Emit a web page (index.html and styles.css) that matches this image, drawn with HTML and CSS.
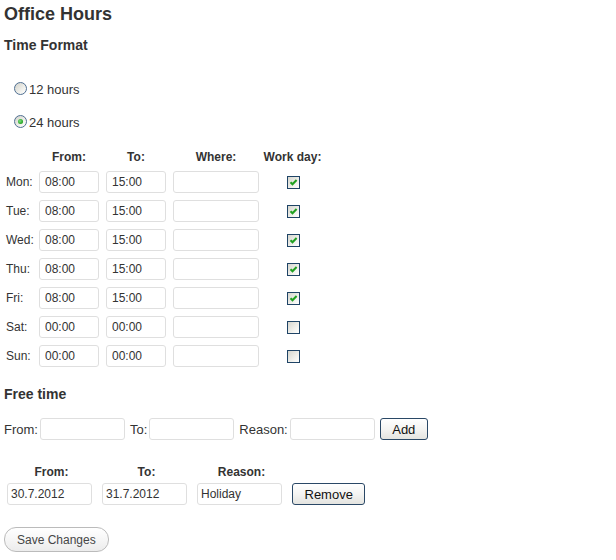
FILE: index.html
```html
<!DOCTYPE html>
<html>
<head>
<meta charset="utf-8">
<title>Office Hours</title>
<link rel="stylesheet" href="styles.css">
</head>
<body>
<div class="wrap">
  <h2 class="title">Office Hours</h2>
  <h3 class="section">Time Format</h3>
  <div class="radios">
    <label class="radio-row"><span class="radio"></span>12 hours</label>
    <label class="radio-row"><span class="radio checked"><span class="dot"></span></span>24 hours</label>
  </div>

  <div class="hours">
    <span></span>
    <span class="hd">From:</span>
    <span class="hd">To:</span>
    <span class="hd">Where:</span>
    <span class="hd workday">Work day:</span>

    <span class="day">Mon:</span><input class="field" value="08:00"><input class="field" value="15:00"><input class="field"><span class="cb on"><svg viewBox="0 0 11 11" width="11" height="11"><path d="M2.5 5.2 L4.5 7.3 L8.6 3" fill="none" stroke="#21a121" stroke-width="2"/></svg></span>
    <span class="day">Tue:</span><input class="field" value="08:00"><input class="field" value="15:00"><input class="field"><span class="cb on"><svg viewBox="0 0 11 11" width="11" height="11"><path d="M2.5 5.2 L4.5 7.3 L8.6 3" fill="none" stroke="#21a121" stroke-width="2"/></svg></span>
    <span class="day">Wed:</span><input class="field" value="08:00"><input class="field" value="15:00"><input class="field"><span class="cb on"><svg viewBox="0 0 11 11" width="11" height="11"><path d="M2.5 5.2 L4.5 7.3 L8.6 3" fill="none" stroke="#21a121" stroke-width="2"/></svg></span>
    <span class="day">Thu:</span><input class="field" value="08:00"><input class="field" value="15:00"><input class="field"><span class="cb on"><svg viewBox="0 0 11 11" width="11" height="11"><path d="M2.5 5.2 L4.5 7.3 L8.6 3" fill="none" stroke="#21a121" stroke-width="2"/></svg></span>
    <span class="day">Fri:</span><input class="field" value="08:00"><input class="field" value="15:00"><input class="field"><span class="cb on"><svg viewBox="0 0 11 11" width="11" height="11"><path d="M2.5 5.2 L4.5 7.3 L8.6 3" fill="none" stroke="#21a121" stroke-width="2"/></svg></span>
    <span class="day">Sat:</span><input class="field" value="00:00"><input class="field" value="00:00"><input class="field"><span class="cb"></span>
    <span class="day">Sun:</span><input class="field" value="00:00"><input class="field" value="00:00"><input class="field"><span class="cb"></span>
  </div>

  <h3 class="section free-title">Free time</h3>
  <div class="free-row">
    <span class="lbl">From:</span><input class="field wide">
    <span class="lbl">To:</span><input class="field wide">
    <span class="lbl">Reason:</span><input class="field wide">
    <button class="btn">Add</button>
  </div>

  <div class="free-list">
    <span class="hd">From:</span>
    <span class="hd">To:</span>
    <span class="hd">Reason:</span>
    <span></span>
    <input class="field wide tight" value="30.7.2012">
    <input class="field wide tight" value="31.7.2012">
    <input class="field wide tight" value="Holiday">
    <button class="btn">Remove</button>
  </div>

  <button class="save">Save Changes</button>
</div>
</body>
</html>
```

FILE: styles.css
```css
body {
  margin: 0;
  font-family: "Liberation Sans", Arial, sans-serif;
  font-size: 13px;
  color: #333;
  background: #fff;
}

.wrap {
  padding: 3px 0 0 4px;
}

.title {
  margin: 0;
  font-size: 18px;
  line-height: 22px;
  font-weight: bold;
  color: #333;
}

.section {
  margin: 11px 0 0;
  font-size: 14px;
  line-height: 18px;
  font-weight: bold;
  color: #333;
}

.radios {
  margin-top: 26px;
  display: flex;
  flex-direction: column;
  gap: 13px;
}

.radio-row {
  display: flex;
  align-items: flex-start;
  gap: 2px;
  height: 20px;
  line-height: 20px;
  padding-left: 10px;
  font-size: 13px;
  color: #333;
}

.radio {
  box-sizing: border-box;
  width: 13px;
  height: 13px;
  margin-top: 2px;
  border: 1px solid #4f6f92;
  border-radius: 50%;
  background: linear-gradient(135deg, #d2d2ca 0%, #f4f4f0 70%, #fff 100%);
  display: flex;
  align-items: center;
  justify-content: center;
}

.radio .dot {
  width: 5px;
  height: 5px;
  border-radius: 50%;
  background: radial-gradient(circle at 40% 40%, #7ee07e 0%, #21a121 70%);
}

.hours {
  margin-top: 17px;
  padding-left: 2px;
  display: grid;
  grid-template-columns: 26px 60px 60px 86px 58px;
  grid-template-rows: 14px;
  grid-auto-rows: 22px;
  column-gap: 7px;
  row-gap: 7px;
  align-items: center;
}

.hours .workday {
  margin-left: -5px;
}

.hd {
  font-size: 12px;
  line-height: 14px;
  font-weight: bold;
  color: #333;
  text-align: center;
  white-space: nowrap;
}

.day {
  font-size: 12px;
  white-space: nowrap;
  color: #333;
}

.field {
  box-sizing: border-box;
  width: 100%;
  height: 22px;
  margin: 0;
  padding: 0 5px;
  border: 1px solid #dfdfdf;
  border-radius: 3px;
  background: #fff;
  font-family: "Liberation Sans", Arial, sans-serif;
  font-size: 12px;
  color: #333;
  outline: none;
}

.field.tight {
  padding: 0 3px;
}

.cb {
  box-sizing: border-box;
  justify-self: center;
  width: 13px;
  height: 13px;
  margin-left: -4px;
  border: 1px solid #1f4466;
  background: linear-gradient(135deg, #d6d6ce 0%, #f2f2ee 65%, #fff 100%);
  display: flex;
}

.cb svg {
  display: block;
}

.free-title {
  margin-top: 18px;
}

.free-row {
  margin-top: 15px;
  display: flex;
  align-items: center;
  height: 22px;
}

.lbl {
  font-size: 13px;
  margin-right: 2px;
  color: #333;
}

.field.wide {
  width: 85px;
}

.free-row .field {
  margin-right: 5px;
}

.btn {
  box-sizing: border-box;
  height: 22px;
  margin: 0;
  padding: 0 11.5px;
  border: 1px solid #2a4866;
  border-radius: 3px;
  background: linear-gradient(#ffffff 0%, #f4f4f2 50%, #e4e4e0 100%);
  font-family: "Liberation Sans", Arial, sans-serif;
  font-size: 13px;
  color: #111;
}

.free-list {
  margin-top: 25px;
  padding-left: 3px;
  display: grid;
  grid-template-columns: 85px 85px 85px auto;
  grid-template-rows: 14px 22px;
  column-gap: 10px;
  row-gap: 4px;
  justify-content: start;
  align-items: center;
}

.free-list .hd {
  padding-left: 4px;
}

.save {
  display: block;
  box-sizing: border-box;
  margin-top: 22px;
  height: 25px;
  padding: 0 12px;
  border: 1px solid #bbb;
  border-radius: 12px;
  background: linear-gradient(#ffffff 0%, #f6f6f6 50%, #ececec 100%);
  font-family: "Liberation Sans", Arial, sans-serif;
  font-size: 12px;
  color: #464646;
}
```
